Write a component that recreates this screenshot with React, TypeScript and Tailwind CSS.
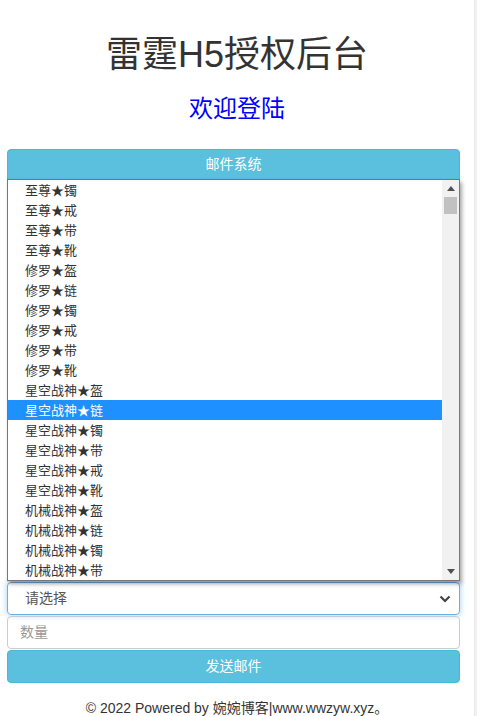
import React from "react";

const items = [
  "至尊★镯", "至尊★戒", "至尊★带", "至尊★靴",
  "修罗★盔", "修罗★链", "修罗★镯", "修罗★戒", "修罗★带", "修罗★靴",
  "星空战神★盔", "星空战神★链", "星空战神★镯", "星空战神★带", "星空战神★戒", "星空战神★靴",
  "机械战神★盔", "机械战神★链", "机械战神★镯", "机械战神★带",
];

export default function App() {
  return (
    <div
      className="flex w-[477px] h-[716px] overflow-hidden bg-white text-[#333]"
      style={{ fontFamily: '"Liberation Sans", "Noto Sans CJK SC", sans-serif' }}
    >
      <div className="flex-1 flex flex-col [&>*]:shrink-0">
        <div className="h-[35px]" />
        <h1 className="h-[40px] flex items-center justify-center text-[36px] leading-none font-normal text-[#333]">
          雷霆H5授权后台
        </h1>
        <div className="h-[21px]" />
        <h2 className="h-[26px] flex items-center justify-center text-[24px] leading-none text-[#0000ff]">
          欢迎登陆
        </h2>
        <div className="h-[27px]" />
        <div className="ml-[7px] w-[453px] flex flex-col [&>*]:shrink-0">
          <div className="h-[31px] rounded-t-[4px] bg-[#5bc0de] border border-[#46b8da] text-white text-[14px] flex items-center justify-center pb-[1px]">
            邮件系统
          </div>
          <div className="relative z-10 -mt-[1px] h-[402px] border border-[#767676] bg-white flex shadow-[2px_3px_4px_rgba(0,0,0,0.35)]">
            <div className="flex-1 flex flex-col">
              {items.map((t, i) => (
                <div
                  key={i}
                  className={
                    "h-[20px] shrink-0 flex items-center pl-[17px] text-[13px] leading-none " +
                    (i === 11 ? "bg-[#1e90ff] text-white" : "text-[#333]")
                  }
                >
                  {t}
                </div>
              ))}
            </div>
            <div className="w-[17px] bg-[#f1f1f1] flex flex-col items-center">
              <div className="h-[17px] flex items-center justify-center">
                <svg width="8" height="5" viewBox="0 0 8 5"><path d="M0 5 L4 0 L8 5 Z" fill="#505050" /></svg>
              </div>
              <div className="w-[13px] h-[17px] bg-[#c1c1c1]" />
              <div className="flex-1" />
              <div className="h-[17px] flex items-center justify-center">
                <svg width="8" height="5" viewBox="0 0 8 5"><path d="M0 0 L4 5 L8 0 Z" fill="#505050" /></svg>
              </div>
            </div>
          </div>
          <div className="h-[1px]" />
          <div className="h-[33px] rounded-[4px] border border-[#66afe9] shadow-[0_0_6px_rgba(102,175,233,0.6)] flex items-center justify-between pl-[17px] pr-[8px] text-[14px] text-[#555]">
            <span>请选择</span>
            <svg width="12" height="8" viewBox="0 0 12 8"><path d="M1.5 1.5 L6 6 L10.5 1.5" fill="none" stroke="#444" strokeWidth="2.2" /></svg>
          </div>
          <div className="h-[1px]" />
          <div className="h-[33px] rounded-[4px] border border-[#ccc] flex items-center pl-[12px] text-[14px] text-[#999]">
            数量
          </div>
          <div className="h-[1px]" />
          <div className="h-[33px] rounded-[4px] bg-[#5bc0de] border border-[#46b8da] text-white text-[14px] flex items-center justify-center">
            发送邮件
          </div>
        </div>
        <div className="h-[16px]" />
        <div className="h-[18px] flex items-center justify-center text-[14px] text-[#333]">
          © 2022 Powered by 婉婉博客|www.wwzyw.xyz。
        </div>
      </div>
      <div className="w-[3px] bg-[#f1f1f1] border-l border-[#e8e8e8]" />
    </div>
  );
}
